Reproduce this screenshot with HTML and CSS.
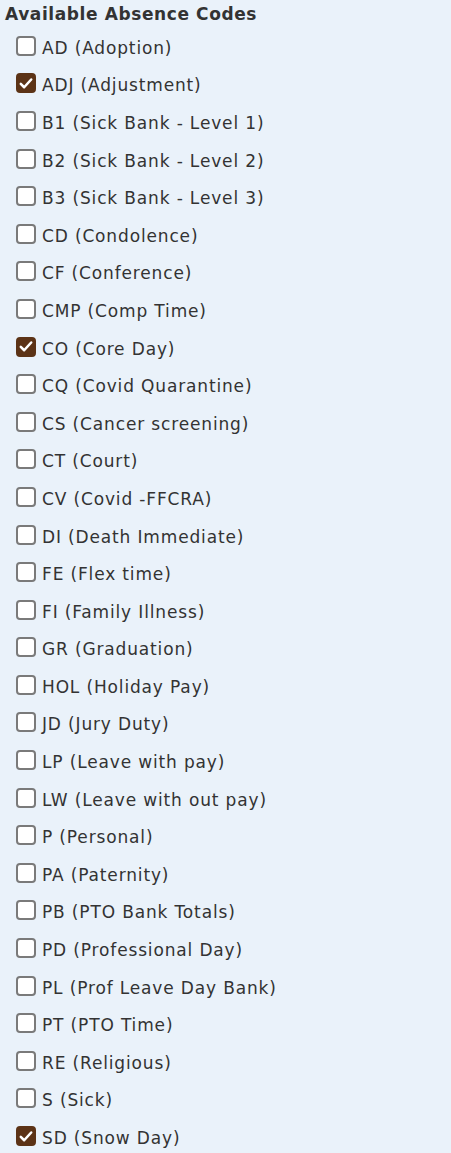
FILE: index.html
```html
<!DOCTYPE html>
<html lang="en">
<head>
  <meta charset="UTF-8" />
  <title>Absence Codes</title>
  <link rel="stylesheet" href="styles.css">
</head>
<body>
  <div class="panel">
    <div class="title">Available Absence Codes</div>
    <div class="codes" id="codes"></div>
  </div>

  <script>
    var codes = [
      ["AD (Adoption)", false],
      ["ADJ (Adjustment)", true],
      ["B1 (Sick Bank - Level 1)", false],
      ["B2 (Sick Bank - Level 2)", false],
      ["B3 (Sick Bank - Level 3)", false],
      ["CD (Condolence)", false],
      ["CF (Conference)", false],
      ["CMP (Comp Time)", false],
      ["CO (Core Day)", true],
      ["CQ (Covid Quarantine)", false],
      ["CS (Cancer screening)", false],
      ["CT (Court)", false],
      ["CV (Covid -FFCRA)", false],
      ["DI (Death Immediate)", false],
      ["FE (Flex time)", false],
      ["FI (Family Illness)", false],
      ["GR (Graduation)", false],
      ["HOL (Holiday Pay)", false],
      ["JD (Jury Duty)", false],
      ["LP (Leave with pay)", false],
      ["LW (Leave with out pay)", false],
      ["P (Personal)", false],
      ["PA (Paternity)", false],
      ["PB (PTO Bank Totals)", false],
      ["PD (Professional Day)", false],
      ["PL (Prof Leave Day Bank)", false],
      ["PT (PTO Time)", false],
      ["RE (Religious)", false],
      ["S (Sick)", false],
      ["SD (Snow Day)", true]
    ];

    var list = document.getElementById("codes");
    codes.forEach(function (c) {
      var row = document.createElement("label");
      row.className = "code";
      var box = document.createElement("span");
      box.className = c[1] ? "box checked" : "box";
      if (c[1]) {
        box.innerHTML = '<svg viewBox="0 0 20 20" width="17" height="17"><path d="M3.5 10.5l4.2 4.2 8.8-9.7" fill="none" stroke="#fff" stroke-width="3.2" stroke-linecap="round" stroke-linejoin="round"/></svg>';
      }
      var text = document.createElement("span");
      text.textContent = c[0];
      row.appendChild(box);
      row.appendChild(text);
      list.appendChild(row);
    });
  </script>
</body>
</html>
```

FILE: styles.css
```css
body {
  margin: 0;
  background: #eaf2fa;
  font-family: 'DejaVu Sans', Verdana, sans-serif;
  color: #333;
}

.panel {
  padding: 3px 0 0 5px;
}

.title {
  font-size: 17px;
  font-weight: bold;
  letter-spacing: 0.6px;
  line-height: 22px;
}

.codes {
  padding-left: 11px;
  padding-top: 4px;
}

.code {
  display: flex;
  align-items: center;
  gap: 6px;
  height: 37.6px;
  font-size: 17px;
  letter-spacing: 0.85px;
}

.box {
  width: 16px;
  height: 16px;
  border: 2px solid #7a7a7a;
  border-radius: 4px;
  background: #fff;
  display: flex;
  align-items: center;
  justify-content: center;
  flex-shrink: 0;
  margin-top: -4px;
}

.box.checked {
  background: #5c3316;
  border-color: #5c3316;
}
```
